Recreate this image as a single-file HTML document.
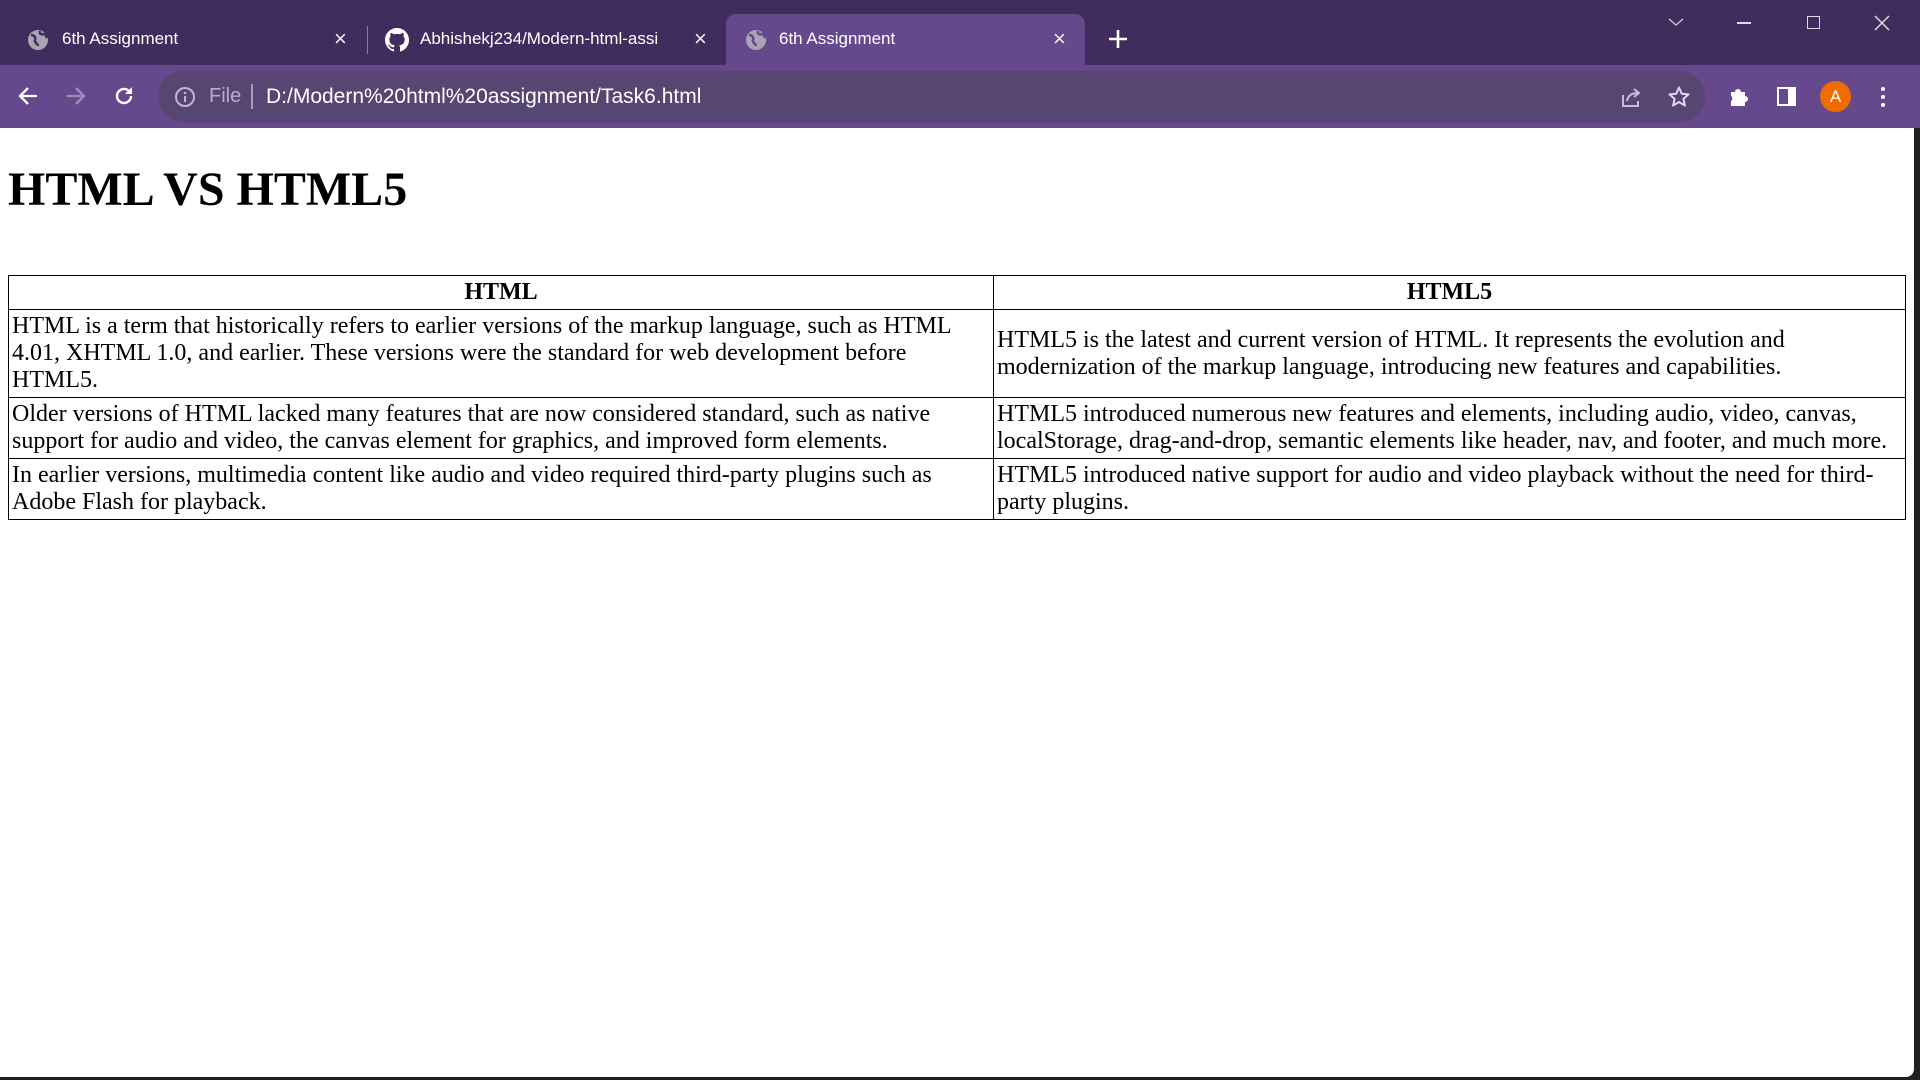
<!DOCTYPE html>
<html><head><meta charset="utf-8"><style>
*{margin:0;padding:0;box-sizing:border-box}
body{width:1920px;height:1080px;overflow:hidden;background:#202020;position:relative;font-family:"Liberation Sans",sans-serif}
.tabbar{position:absolute;left:0;top:0;width:1920px;height:65px;background:#412c5e}
.toolbar{position:absolute;left:0;top:65px;width:1920px;height:63px;background:#66488c}
.page{position:absolute;left:0;top:128px;width:1914px;height:949px;background:#fff;border-bottom-right-radius:8px}
.tab{position:absolute;top:14px;height:51px;color:#fff;font-size:17px}
.tab .t{position:absolute;top:15px;white-space:nowrap;overflow:hidden}
.active{left:726px;width:359px;background:#66488c;border-radius:10px 10px 0 0}
.x{position:absolute;top:12px;font-size:22px;color:#eee}
.omni{position:absolute;left:158px;top:71px;width:1547px;height:51px;border-radius:26px;background:#574572}
.url{position:absolute;left:266px;top:85px;font-size:21px;color:#fff}
.file{position:absolute;left:209px;top:85px;font-size:20px;color:#b9adc9}
svg{position:absolute}
h1{position:absolute;left:8px;top:162px;font:bold 48px/56px "Liberation Serif",serif;color:#000}
table{position:absolute;left:8px;top:275px;width:1897px;border-collapse:collapse;table-layout:fixed;font:24px/27px "Liberation Serif",serif;color:#000}
td,th{border:1px solid #000;padding:3px 3px;vertical-align:middle;text-align:left}
th{text-align:center;font-weight:bold;padding:3px 3px}
</style></head><body>
<div class="tabbar"></div>
<div class="toolbar"></div>
<div class="tab" style="left:0;width:360px">
 <svg style="left:27px;top:15px" width="22" height="22" viewBox="0 0 22 22"><circle cx="11" cy="11" r="10" fill="#a9a3b3"/><path d="M4 6c3 0 5 2 4 5s3 3 3 6M13 2c-1 3 2 4 4 3s2 3 3 4" stroke="#412c5e" stroke-width="2.5" fill="none"/></svg>
 <div class="t" style="left:62px">6th Assignment</div>
 <div class="x" style="left:334px">×</div>
</div>
<div style="position:absolute;left:367px;top:26px;width:1px;height:28px;background:#8a7aa0"></div>
<div class="tab" style="left:370px;width:356px">
 <svg style="left:15px;top:14px" width="24" height="24" viewBox="0 0 16 16"><path fill="#fff" d="M8 0C3.58 0 0 3.58 0 8c0 3.54 2.29 6.530 5.47 7.59.4.07.55-.17.55-.38v-1.33c-2.23.48-2.7-1.07-2.7-1.07-.36-.93-.89-1.170-.89-1.17-.73-.5.05-.49.05-.49.8.06 1.23.83 1.23.83.71 1.22 1.870.87 2.33.66.07-.52.28-.87.5-1.07-1.780-.2-3.64-.89-3.64-3.95 0-.87.31-1.59.82-2.15-.08-.2-.36-1.02.08-2.12 0 0 .67-.21 2.2.82a7.5 7.5 0 0 1 4 0c1.53-1.04 2.2-.82 2.2-.82.44 1.1.16 1.92.08 2.12.51.56.82 1.27.82 2.15 0 3.07-1.87 3.75-3.65 3.95.29.25.54.73.54 1.48v2.2c0 .21.15.46.55.38A8 8 0 0 0 16 8c0-4.42-3.58-8-8-8z"/></svg>
 <div class="t" style="left:50px;max-width:278px">Abhishekj234/Modern-html-assi</div>
 <div class="x" style="left:324px">×</div>
</div>
<div class="tab active">
 <svg style="left:19px;top:15px" width="22" height="22" viewBox="0 0 22 22"><circle cx="11" cy="11" r="10" fill="#a9a3b3"/><path d="M4 6c3 0 5 2 4 5s3 3 3 6M13 2c-1 3 2 4 4 3s2 3 3 4" stroke="#66488c" stroke-width="2.5" fill="none"/></svg>
 <div class="t" style="left:53px">6th Assignment</div>
 <div class="x" style="left:327px">×</div>
</div>
<svg style="left:1107px;top:28px" width="22" height="22" viewBox="0 0 22 22"><path d="M11 2v18M2 11h18" stroke="#fff" stroke-width="2.6"/></svg>
<svg style="left:1668px;top:16px" width="16" height="12" viewBox="0 0 16 12"><path d="M1 3l7 6 7-6" stroke="#ccc" stroke-width="1.3" fill="none"/></svg>
<div style="position:absolute;left:1737px;top:22px;width:14px;height:1.5px;background:#ddd"></div>
<div style="position:absolute;left:1807px;top:16px;width:13px;height:13px;border:1.5px solid #ddd"></div>
<svg style="left:1874px;top:15px" width="16" height="16" viewBox="0 0 16 16"><path d="M1 1l14 14M15 1L1 15" stroke="#ddd" stroke-width="1.5"/></svg>
<svg style="left:17px;top:85px" width="22" height="22" viewBox="0 0 22 22"><path d="M20 11H3M11 3l-8 8 8 8" stroke="#fff" stroke-width="2.3" fill="none"/></svg>
<svg style="left:65px;top:85px" width="22" height="22" viewBox="0 0 22 22"><path d="M2 11h17M11 3l8 8-8 8" stroke="#a18fbb" stroke-width="2.3" fill="none"/></svg>
<svg style="left:113px;top:85px" width="22" height="22" viewBox="0 0 22 22"><path d="M18 11a7 7 0 1 1-2.2-5.1" stroke="#fff" stroke-width="2.4" fill="none"/><path d="M19 2v7h-7z" fill="#fff"/></svg>
<div class="omni"></div>
<svg style="left:174px;top:86px" width="22" height="22" viewBox="0 0 22 22"><circle cx="11" cy="11" r="9" stroke="#c0b6cf" stroke-width="2" fill="none"/><path d="M11 10v6" stroke="#c0b6cf" stroke-width="2"/><circle cx="11" cy="7" r="1.3" fill="#c0b6cf"/></svg>
<div class="file">File</div>
<div style="position:absolute;left:251px;top:84px;width:2px;height:25px;background:#a99bbb"></div>
<div class="url">D:/Modern%20html%20assignment/Task6.html</div>
<svg style="left:1620px;top:86px" width="22" height="22" viewBox="0 0 22 22"><path d="M3 9v11h15v-5" stroke="#c8bed6" stroke-width="2" fill="none"/><path d="M7 15c1-6 5-8 11-8M14 3l5 4-5 4" stroke="#c8bed6" stroke-width="2" fill="none"/></svg>
<svg style="left:1667px;top:85px" width="24" height="24" viewBox="0 0 24 24"><path d="M12 2.5l2.8 6.3 6.7.6-5.1 4.5 1.5 6.6L12 17l-5.9 3.5 1.5-6.6L2.5 9.4l6.7-.6z" stroke="#e0d8ea" stroke-width="2" fill="none" stroke-linejoin="round"/></svg>
<svg style="left:1728px;top:85px" width="22" height="22" viewBox="0 0 22 22"><path d="M3 7h4a3 3 0 0 1 6 0h4v4a3 3 0 0 1 0 6v4H3v-5a3 3 0 0 0 0-5z" fill="#fff"/></svg>
<div style="position:absolute;left:1777px;top:87px;width:19px;height:19px;border:2.5px solid #fff;border-right-width:8px"></div>
<div style="position:absolute;left:1820px;top:81px;width:31px;height:31px;border-radius:50%;background:#ef6c00;color:#fff;font-size:17px;text-align:center;line-height:31px">A</div>
<div style="position:absolute;left:1881px;top:87px;width:4px;height:4px;border-radius:2px;background:#fff;box-shadow:0 8px 0 #fff,0 16px 0 #fff"></div>
<div class="page"></div>
<h1>HTML VS HTML5</h1>
<table>
<colgroup><col style="width:985px"><col style="width:912px"></colgroup>
<tr><th>HTML</th><th>HTML5</th></tr>
<tr><td>HTML is a term that historically refers to earlier versions of the markup language, such as HTML 4.01, XHTML 1.0, and earlier. These versions were the standard for web development before HTML5.</td><td>HTML5 is the latest and current version of HTML. It represents the evolution and modernization of the markup language, introducing new features and capabilities.</td></tr>
<tr><td>Older versions of HTML lacked many features that are now considered standard, such as native support for audio and video, the canvas element for graphics, and improved form elements.</td><td>HTML5 introduced numerous new features and elements, including audio, video, canvas, localStorage, drag-and-drop, semantic elements like header, nav, and footer, and much more.</td></tr>
<tr><td>In earlier versions, multimedia content like audio and video required third-party plugins such as Adobe Flash for playback.</td><td>HTML5 introduced native support for audio and video playback without the need for third-party plugins.</td></tr>
</table>
</body></html>
